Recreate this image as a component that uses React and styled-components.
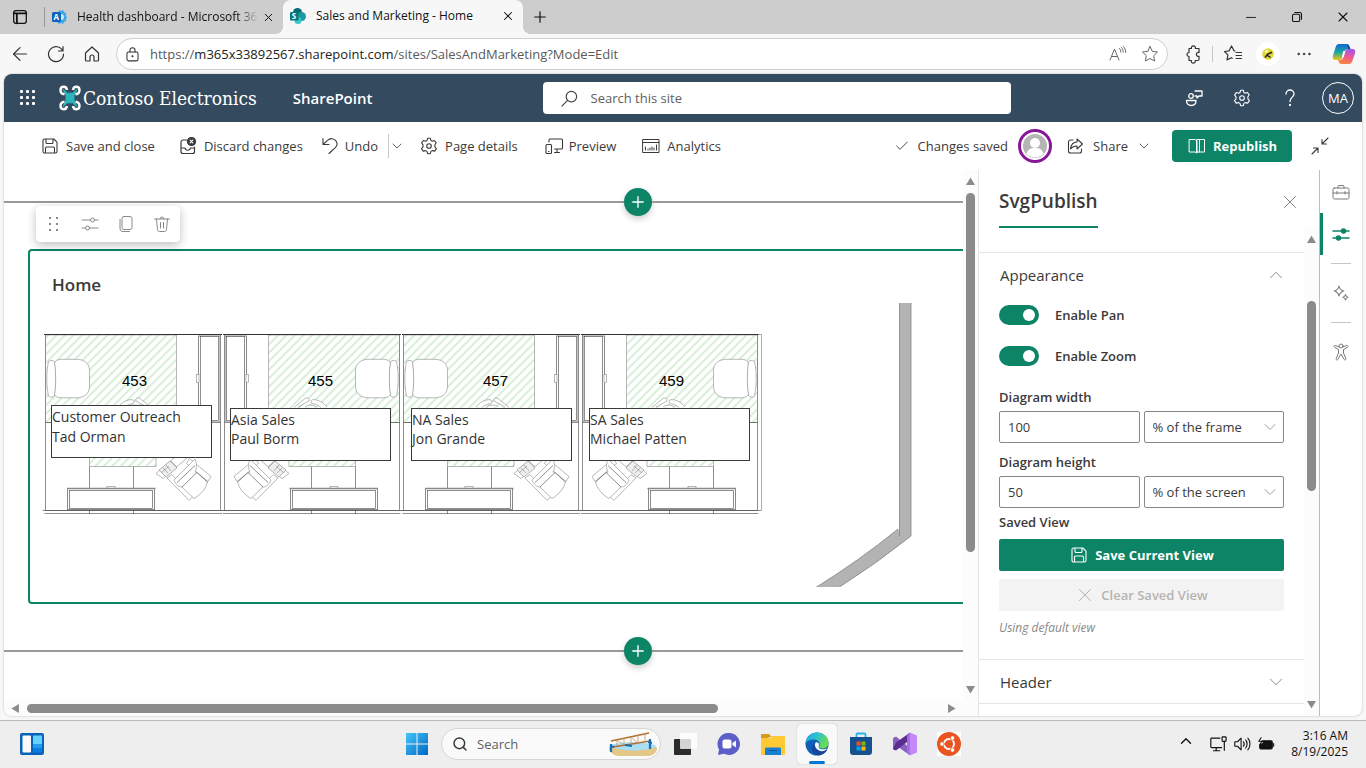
import React from "react";
import styled, { createGlobalStyle, css } from "styled-components";
import { ArrowLeft, Check, ChevronDown, ChevronUp, Plus, Search, X } from "lucide-react";

const green = "#0c8465";
const ink = "#3b3a39";

const GlobalStyle = createGlobalStyle`
  * {
    box-sizing: border-box;
  }
  body {
    margin: 0;
    background: #f7f7f7;
    color: ${ink};
    font-family: "Open Sans", "Noto Sans", sans-serif;
    font-size: 13px;
    line-height: 20px;
  }
  button, input, select {
    font: inherit;
    color: inherit;
  }
  button {
    padding: 0;
    border: 0;
    background: none;
  }
`;

const Screen = styled.div`
  display: flex;
  flex-direction: column;
  height: 100vh;
  overflow: hidden;
`;
const Grow = styled.div`
  flex: 1;
`;
const Svg = styled.svg`
  display: block;
  flex: none;
  fill: none;
  stroke: currentColor;
  stroke-width: ${p => p.$stroke || 1};
  stroke-linecap: round;
  stroke-linejoin: round;
`;

const Icon = ({ size = 20, stroke, children }) => (
  <Svg width={size} height={size} viewBox="0 0 20 20" $stroke={stroke} aria-hidden="true">
    {children}
  </Svg>
);

/* browser tabs */

const TabStrip = styled.div`
  display: flex;
  align-items: center;
  height: 34px;
  background: #cdcdcd;
  color: #111;
  font-size: 12px;
`;
const TabMenu = styled.button`
  display: flex;
  justify-content: center;
  width: 40px;
  margin-right: 4px;
`;
const Tab = styled.div`
  position: relative;
  display: flex;
  align-items: center;
  width: 240px;
  height: 34px;
  padding: 0 8px 2px 7px;
  ${p =>
    p.$active &&
    css`
      background: #f7f7f7;
      border-radius: 8px 8px 0 0;
      &::before,
      &::after {
        content: "";
        position: absolute;
        bottom: 0;
        width: 8px;
        height: 8px;
      }
      &::before {
        right: 100%;
        background: radial-gradient(circle at 0 0, #cdcdcd 8px, #f7f7f7 8px);
      }
      &::after {
        left: 100%;
        background: radial-gradient(circle at 100% 0, #cdcdcd 8px, #f7f7f7 8px);
      }
    `}
  ${p =>
    !p.$active &&
    css`
      width: 239px;
      border-left: 1px solid #9a9a9a;
      height: 20px;
      padding-bottom: 0;
    `}
`;
const TabTitle = styled.span`
  flex: 1;
  margin: 0 4px 0 10px;
  overflow: hidden;
  white-space: nowrap;
  ${p => p.$faded && "mask-image: linear-gradient(to left, transparent, #000 20px);"}
`;
const WindowButton = styled.button`
  display: flex;
  align-items: center;
  justify-content: center;
  width: 46px;
  height: 34px;
`;
const NewTab = styled(WindowButton)`
  width: 34px;
`;

/* address bar */

const AddressBar = styled.div`
  display: flex;
  align-items: center;
  height: 40px;
  padding: 0 3px 0 2px;
  color: #333;
`;
const NavButton = styled.button`
  display: flex;
  align-items: center;
  justify-content: center;
  width: ${p => p.$width || 36}px;
  height: 32px;
`;
const UrlBox = styled.div`
  flex: 1;
  display: flex;
  align-items: center;
  gap: 9px;
  height: 32px;
  margin: 0 6px;
  padding: 0 7px;
  border: 1px solid #cfcfcf;
  border-radius: 16px;
  background: #fff;
`;
const Url = styled.div`
  flex: 1;
  color: #5a5a5a;
  b {
    font-weight: 400;
    color: #222;
  }
`;
const UrlIcons = styled.div`
  display: flex;
  gap: 12px;
  color: #666;
`;
const Separator = styled.div`
  width: 1px;
  height: ${p => p.$height}px;
  background: #c8c8c8;
`;
const Profile = styled.span`
  display: flex;
  align-items: center;
  justify-content: center;
  width: 24px;
  height: 24px;
  border-radius: 50%;
  background: #fff;
`;

/* SharePoint frame */

const Frame = styled.main`
  flex: 1;
  display: flex;
  flex-direction: column;
  min-height: 0;
  margin: 0 4px 4px;
  border-radius: 8px;
  background: #fff;
  box-shadow: 0 0 2px rgba(0, 0, 0, 0.3);
  overflow: hidden;
`;
const SuiteBar = styled.header`
  display: grid;
  grid-template-columns: 23fr 20fr 15fr;
  align-items: center;
  height: 48px;
  flex: none;
  background: #344a5f;
  color: #fff;
`;
const SuiteLeft = styled.div`
  display: flex;
  align-items: center;
`;
const SuiteButton = styled.button`
  display: flex;
  align-items: center;
  justify-content: center;
  width: 48px;
  height: 48px;
`;
const Brand = styled.a`
  display: flex;
  align-items: center;
  gap: 2px;
  margin: 0 36px 0 7px;
  color: #fff;
  text-decoration: none;
  font-family: "DejaVu Serif Condensed", "DejaVu Serif", serif;
  font-size: 19px;
  white-space: nowrap;
`;
const Product = styled.a`
  color: #fff;
  font-size: 15px;
  font-weight: 600;
  text-decoration: none;
`;
const SiteSearch = styled.label`
  display: flex;
  align-items: center;
  gap: 12px;
  height: 32px;
  padding: 0 17px;
  border-radius: 4px;
  background: #fff;
  color: #444;
  input {
    flex: 1;
    border: 0;
    outline: 0;
    padding: 0;
    background: none;
  }
  input::placeholder {
    color: #605e5c;
    opacity: 1;
  }
`;
const SuiteRight = styled.div`
  display: flex;
  justify-content: flex-end;
`;
const Initials = styled.span`
  display: flex;
  align-items: center;
  justify-content: center;
  width: 32px;
  height: 32px;
  border: 1px solid #fff;
  border-radius: 50%;
`;

const CommandBar = styled.div`
  display: flex;
  align-items: center;
  flex: none;
  height: 48px;
  padding: 0 32px 0 36px;
`;
const Command = styled.button`
  display: flex;
  align-items: center;
  gap: ${p => p.$gap || 6}px;
  height: 32px;
  margin-right: ${p => p.$space || 0}px;
  white-space: nowrap;
`;
const Persona = styled.span`
  display: flex;
  align-items: center;
  justify-content: center;
  width: 34px;
  height: 34px;
  margin: 0 13px 0 10px;
  border: 3px solid #881798;
  border-radius: 50%;
`;
const Primary = styled.button`
  display: flex;
  align-items: center;
  justify-content: center;
  gap: 6px;
  height: 32px;
  padding: 0 16px;
  border-radius: 4px;
  background: ${green};
  color: #fff;
  font-weight: 700;
  white-space: nowrap;
  &:disabled {
    background: #f3f3f3;
    color: #b5b3b1;
    font-weight: 600;
  }
`;
const Republish = styled(Primary)`
  width: 120px;
  margin-right: 18px;
`;

const Workspace = styled.div`
  flex: 1;
  display: flex;
  min-height: 0;
`;
const CanvasArea = styled.section`
  flex: 1;
  display: grid;
  grid-template-columns: minmax(0, 1fr) 15px;
  grid-template-rows: minmax(0, 1fr) 15px;
  min-width: 0;
  background: #fcfcfc;
`;
const Canvas = styled.div`
  overflow: hidden;
  background: #fff;
`;
const Page = styled.div`
  position: relative;
  min-width: 1268px;
`;
const Zone = styled.div`
  display: flex;
  align-items: center;
  height: 64px;
  &::before,
  &::after {
    content: "";
    flex: 1;
    height: 2px;
    background: #999;
  }
`;
const AddButton = styled.button`
  display: flex;
  align-items: center;
  justify-content: center;
  width: 28px;
  height: 28px;
  border-radius: 50%;
  background: ${green};
  color: #fff;
  box-shadow: 0 3px 6px rgba(0, 0, 0, 0.2);
`;
const WebPartTools = styled.div`
  position: absolute;
  top: 36px;
  left: 32px;
  display: flex;
  border-radius: 4px;
  background: #fff;
  color: #8a8886;
  box-shadow: 0 3px 10px rgba(0, 0, 0, 0.25);
  button {
    display: flex;
    align-items: center;
    justify-content: center;
    width: 36px;
    height: 36px;
  }
`;
const WebPart = styled.section`
  margin: 15px 24px;
  padding: 16px 0 15px;
  border: 2px solid ${green};
  border-radius: 4px;
  h2 {
    margin: 0 22px;
    font-size: 17px;
    font-weight: 600;
    line-height: 36px;
  }
  svg {
    display: block;
  }
`;

/* scrollbars */

const Track = styled.div`
  display: flex;
  flex-direction: ${p => (p.$horizontal ? "row" : "column")};
  align-items: center;
  gap: 7px;
  padding: ${p => (p.$horizontal ? "0 7px" : "7px 0")};
  background: #fcfcfc;
`;
const Arrow = styled.i`
  flex: none;
  width: 9px;
  height: 9px;
  background: #8b8b8b;
  clip-path: ${p =>
    ({
      up: "polygon(50% 5%, 100% 88%, 0 88%)",
      down: "polygon(0 12%, 100% 12%, 50% 95%)",
      left: "polygon(88% 0, 88% 100%, 5% 50%)",
      right: "polygon(12% 0, 95% 50%, 12% 100%)"
    }[p.$to])};
`;
const Thumb = styled.div`
  flex: ${p => p.$size} 0 0;
  align-self: stretch;
  margin: ${p => (p.$horizontal ? "3px 0" : "0 3px")};
  border-radius: 5px;
  background: #8b8b8b;
`;
const Rest = styled.div`
  flex: ${p => p.$size} 0 0;
`;

const Scrollbar = ({ horizontal, before = 0, thumb, after }) => (
  <Track $horizontal={horizontal}>
    <Arrow $to={horizontal ? "left" : "up"} />
    {before > 0 && <Rest $size={before} />}
    <Thumb $size={thumb} $horizontal={horizontal} />
    <Rest $size={after} />
    <Arrow $to={horizontal ? "right" : "down"} />
  </Track>
);

/* property pane */

const Pane = styled.aside`
  display: grid;
  grid-template-columns: minmax(0, 1fr) 15px;
  grid-template-rows: 58px minmax(0, 1fr);
  width: 341px;
  flex: none;
  border-left: 1px solid #e5e5e5;
`;
const PaneHeader = styled.div`
  grid-column: 1 / -1;
  display: flex;
  justify-content: space-between;
  padding: 0 19px 0 20px;
`;
const PaneTitle = styled.h2`
  margin: 0;
  padding-top: 7px;
  border-bottom: 2px solid ${green};
  font-size: 19px;
  font-weight: 600;
  line-height: 49px;
`;
const CloseButton = styled.button`
  align-self: center;
  margin: 5px 0 0;
  color: #8a8886;
`;
const PaneBody = styled.div`
  padding-top: 24px;
  overflow: hidden;
`;
const GroupHeader = styled.button`
  display: flex;
  align-items: center;
  justify-content: space-between;
  width: 100%;
  height: 44px;
  padding: 0 17px 0 21px;
  border-top: 1px solid #e5e5e5;
  font-size: 15px;
  svg {
    color: #a19f9d;
  }
`;
const GroupBody = styled.div`
  display: flex;
  flex-direction: column;
  padding: 9px 20px 21px;
`;
const PaneDivider = styled.div`
  border-top: 1px solid #e5e5e5;
`;
const Toggle = styled.div`
  display: flex;
  align-items: center;
  gap: 16px;
  height: 20px;
  margin-bottom: 21px;
  font-weight: 600;
  input {
    appearance: none;
    display: flex;
    align-items: center;
    width: 40px;
    height: 20px;
    margin: 0;
    padding: 0 4px;
    border-radius: 10px;
    background: #8a8886;
  }
  input::before {
    content: "";
    width: 12px;
    height: 12px;
    border-radius: 50%;
    background: #fff;
  }
  input:checked {
    justify-content: flex-end;
    background: ${green};
  }
`;
const FieldLabel = styled.label`
  margin-bottom: 4px;
  font-weight: 600;
`;
const FieldRow = styled.div`
  display: grid;
  grid-template-columns: 1fr 1fr;
  gap: 4px;
  margin-bottom: ${p => p.$space}px;
`;
const NumberBox = styled.input`
  width: 100%;
  height: 32px;
  padding: 0 8px;
  border: 1px solid #8a8886;
  border-radius: 2px;
`;
const SelectBox = styled.div`
  display: flex;
  align-items: center;
  position: relative;
  select {
    appearance: none;
    width: 100%;
    height: 32px;
    padding: 0 28px 0 8px;
    border: 1px solid #8a8886;
    border-radius: 2px;
    background: #fff;
  }
  svg {
    position: absolute;
    right: 4px;
    color: #a19f9d;
    pointer-events: none;
  }
`;
const SavedLabel = styled.div`
  margin-bottom: 7px;
  font-weight: 600;
`;
const Hint = styled.em`
  margin-top: 7px;
  color: #8a8886;
  font-size: 12px;
`;
const Stack = styled.div`
  display: grid;
  gap: 8px;
  button {
    border-radius: 2px;
  }
`;
const Rail = styled.nav`
  display: flex;
  flex-direction: column;
  align-items: center;
  width: 43px;
  flex: none;
  padding-top: 1px;
  border-left: 1px solid #bdbdbd;
  hr {
    width: 20px;
    margin: 8px 0;
    border: 0;
    border-top: 1px solid #c8c6c4;
  }
`;
const RailButton = styled.button`
  display: flex;
  align-items: center;
  justify-content: center;
  width: 100%;
  height: 42px;
  color: ${p => (p.$active ? green : "#7a7876")};
  ${p => p.$active && `box-shadow: inset 3px 0 ${green};`}
`;

/* taskbar */

const Taskbar = styled.footer`
  display: grid;
  grid-template-columns: 1fr auto 1fr;
  align-items: center;
  flex: none;
  height: 48px;
  padding-bottom: 2px;
  border-top: 1px solid #bcbcbc;
  background: #eee;
`;
const TaskItems = styled.div`
  display: flex;
  align-items: center;
  gap: 4px;
`;
const TaskButton = styled.button`
  position: relative;
  display: flex;
  align-items: center;
  justify-content: center;
  width: 40px;
  height: 40px;
  border-radius: 4px;
  ${p =>
    p.$active &&
    css`
      background: #f9f9f9;
      box-shadow: 0 0 1px rgba(0, 0, 0, 0.35);
      &::after {
        content: "";
        position: absolute;
        bottom: 0;
        width: 16px;
        height: 3px;
        border-radius: 2px;
        background: #0078d4;
      }
    `}
`;
const WidgetsButton = styled(TaskButton)`
  margin-left: 12px;
`;
const TaskSearch = styled.label`
  display: flex;
  align-items: center;
  gap: 9px;
  width: 220px;
  height: 32px;
  padding: 0 2px 0 10px;
  border: 1px solid #d6d6d6;
  border-radius: 16px;
  background: #fafafa;
  input {
    flex: 1;
    min-width: 0;
    border: 0;
    outline: 0;
    padding: 0;
    background: none;
  }
  input::placeholder {
    color: #606060;
    opacity: 1;
  }
`;
const Tray = styled.div`
  display: flex;
  align-items: center;
  justify-content: flex-end;
  gap: 6px;
  padding-right: 18px;
  color: #111;
`;
const TrayChevron = styled.span`
  margin-right: 8px;
`;
const Clock = styled.div`
  margin-left: 10px;
  font-size: 12px;
  line-height: 16px;
  text-align: right;
`;

/* icons */

const SaveIcon = () => (
  <Icon stroke={1.1}>
    <path d="M3 4.500C3 3.700 3.700 3 4.500 3h9.300L17 6.200v9.300c0 .8-.7 1.500-1.500 1.500h-11C3.700 17 3 16.300 3 15.500zM6 3v3.500c0 .6.4 1 1 1h5c.6 0 1-.4 1-1V3M5.500 17v-5c0-.6.4-1 1-1h7c.6 0 1 .4 1 1v5" />
  </Icon>
);
const GearIcon = ({ size }) => (
  <Icon size={size} stroke={1.1}>
    <circle cx="10" cy="10" r="2.300" />
    <path d="M8.600 2.300h2.800l.5 2.200 1.300.7 2.200-.7 1.800 2.300-1.300 2v2l1.500 1.800-1.700 2.500-2.500-.5-1.300.8-.6 2.300H8.600L8 15.400l-1.300-.8-2.500.5-1.700-2.500L4 10.900v-2l-1.400-2 1.800-2.400 2.300.7L8 4.500z" />
  </Icon>
);
const SlidersIcon = ({ filled }) => (
  <Icon stroke={filled ? 1.5 : 1}>
    <path d={filled ? "M2 7h16M2 14h16" : "M2 6h8.500M14.500 6H18M2 14h3.500M9.500 14H18"} />
    <circle cx="12.500" cy={filled ? 7 : 6} r="2" fill={filled ? "currentColor" : "none"} />
    <circle cx="7.500" cy="14" r="2" fill={filled ? "currentColor" : "none"} />
  </Icon>
);
const StarPath = "M10 2.500l2.300 4.800 5.200.7-3.800 3.700.9 5.300-4.600-2.500L5.400 17l.9-5.300L2.500 8l5.200-.7z";

const DroneLogo = () => (
  <svg width="22" height="26" viewBox="0 0 22 26" fill="none">
    <path d="M4 4.500l4.500 3.700h5L18 4.500l-3 6v5l3 6-4.500-3.700h-5L4 21.500l3-6v-5z" fill="#2bb5bd" stroke="#2bb5bd" />
    <g stroke="#fff" strokeWidth="2.400">
      <path d="M5.500 9.300C3 9 1.500 7.500 1.500 5.200c0-4.500 6-4.500 6.500-.2" />
      <path d="M16.500 9.300c2.500-.3 4-1.800 4-4.100 0-4.500-6-4.500-6.500-.2" />
      <path d="M5.500 16.700C3 17 1.500 18.500 1.500 20.800c0 4.500 6 4.500 6.500.2" />
      <path d="M16.500 16.700c2.500.3 4 1.800 4 4.100 0 4.500-6 4.500-6.500.2" />
    </g>
  </svg>
);

const HealthIcon = () => (
  <svg width="15" height="16" viewBox="0 0 15 16">
    <path d="M7 1l2 1 2-1 1 2 2 1v3l1 1-1 2v2l-2 1-1 2-2-1-2 1-2-2z" fill="#3aa8ea" />
    <circle cx="9" cy="8" r="3" fill="#c5ecff" />
    <rect x="0" y="3" width="9" height="10" rx="1.500" fill="#0f62c0" />
    <text x="1.500" y="11" fontSize="8" fontWeight="700" fontFamily="Open Sans" fill="#fff">A</text>
  </svg>
);
const SharePointIcon = () => (
  <svg width="16" height="16" viewBox="0 0 16 16">
    <circle cx="7.500" cy="4.500" r="4.500" fill="#036c70" />
    <circle cx="11.500" cy="8.500" r="4.500" fill="#1a9ba1" />
    <circle cx="8" cy="12.500" r="3.500" fill="#37c6d0" />
    <rect x="0" y="4" width="8.500" height="8.500" rx="1" fill="#03787c" />
    <text x="1.700" y="11" fontSize="8" fontWeight="700" fontFamily="Open Sans" fill="#fff">S</text>
  </svg>
);
const CopilotIcon = () => (
  <svg width="24" height="22" viewBox="0 0 24 22">
    <defs>
      <linearGradient id="cpA" x1="0" y1="0" x2="0" y2="1">
        <stop offset="0" stopColor="#1467d8" />
        <stop offset="0.500" stopColor="#17a6a0" />
        <stop offset="1" stopColor="#f2c518" />
      </linearGradient>
      <linearGradient id="cpB" x1="0.500" y1="0" x2="0.300" y2="1">
        <stop offset="0" stopColor="#a356ea" />
        <stop offset="0.500" stopColor="#ef5a90" />
        <stop offset="1" stopColor="#f98a3c" />
      </linearGradient>
    </defs>
    <path d="M7 1h8c1.800 0 2.300 1.500 2.800 3l.7 2h-3c-1.500 0-2.500 1-3 2.500L10.800 14c-.6 1.900-1.500 3-3.500 3H3.500C1 17 .3 14.800 1 12.500l2.500-8C4.200 2.200 5 1 7 1z" fill="url(#cpA)" />
    <path d="M17 21H9.500c-2 0-2.600-1.500-3-3l-.3-1h2c1.900 0 2.600-1.200 3.200-3l1.700-5.500C13.700 6.700 14.600 6 16 6h4.500c2.500 0 3.200 2 2.500 4.500l-2.500 7c-.8 2.300-1.500 3.500-3.500 3.500z" fill="url(#cpB)" />
    <path d="M11.300 8h2.200l-2 6.500H9.800z" fill="#fff" />
    <path d="M14.500 1.500c2.300 0 2.700 2.500 4 4.500h-3c1-1.500.5-3-1-4.500z" fill="#1a3fb0" />
  </svg>
);

/* floor plan */

const thin = { stroke: "#888", strokeWidth: 0.6, fill: "#fff" };

const Cubicle = ({ hatch }) => (
  <g {...thin}>
    <rect x="45.500" y="334.500" width="175" height="176" stroke="#444" />
    <path d="M45.500 335H176.500V422.500H156V466.500H89.500V422.500H45.500z" fill={`url(#${hatch})`} />
    <path d="M45.500 422.500H220.500M42.500 510.500H224M44.500 513.500H222M89.500 466.500V488M133.500 466.500V488M89.500 510V514M133.500 510V514" stroke="#444" />
    <path d="M44 334.500H222" stroke="#333" strokeWidth="1" />
    {/* wardrobe */}
    <rect x="198.500" y="336" width="21.500" height="86" strokeWidth="1" />
    <rect x="200.500" y="336.500" width="18" height="84" stroke="#444" />
    <rect x="196.500" y="374.500" width="2.500" height="8" />
    {/* guest chair */}
    <path d="M54.500 364c0-3 3-4.500 7-4.700h15c8 0 13 4.500 13 11v16c0 7-5 11.500-13 11.500h-15c-4-.2-7-1.500-7-4.500 1.300-10 1.300-20 0-29.300z" />
    <path d="M48.500 361.500c2-1.500 5.500-1.500 6 .5 1.600 11 1.600 23 0 33-.5 2.500-4 2.800-6 1-2.300-11-2.300-24 0-34.500z" />
    {/* desk chair behind the label */}
    <path d="M118 407c4-5 9-7.500 14-7.300 3 .2 2 3.500 0 4-4 .8-6 2-8 4M147 407l-11-6c-1-3 2-3.500 4-2.500l11 9M129 407c2-2.500 9-2.500 11 0" />
    {/* laptop shelf */}
    <path d="M156 473.500l28-24 6 6-27 23z" />
    <path d="M159 470l11-9 7 7-11 9zM163 468l5 5M166 465l5 6M171 461l6 6M161 473l8-7" fill="#eee" />
    {/* drafting chair */}
    <path d="M167 478l22 22.300 4-3.700-21-22z" />
    <path d="M189.500 458.500l21.500 18-3 5-21.500-18z" />
    <path d="M174 480l21-21c2 5 2 9 0 13l12 10c0 6-8 14-13 16.500L182 487c-3 0-6-2-8-7z" />
    <path d="M177 482.500l18-17M182 487l15-14.500 11 10" stroke="#444" />
    {/* low cabinet */}
    <rect x="67.500" y="488.500" width="87" height="21" strokeWidth="1" />
    <rect x="69.500" y="490.500" width="83" height="18" stroke="#444" />
    <rect x="107" y="486.500" width="8" height="2" />
    <path d="M67 488.500H155.500" strokeWidth="1.500" />
  </g>
);

const cubicles = [
  { place: "translate(0 0)", room: "453", numX: 122, x: 51.5, y: 405.5, base: 422, line: 20, name: "Customer Outreach", who: "Tad Orman" },
  { place: "translate(445 0) scale(-1 1)", flip: true, room: "455", numX: 308, x: 230.5, y: 408.5, base: 425, line: 19, name: "Asia Sales", who: "Paul Borm" },
  { place: "translate(358 0)", room: "457", numX: 483, x: 411.5, y: 408.5, base: 425, line: 19, name: "NA Sales", who: "Jon Grande" },
  { place: "translate(803 0) scale(-1 1)", flip: true, room: "459", numX: 659, x: 589.5, y: 408.5, base: 425, line: 19, name: "SA Sales", who: "Michael Patten" }
];

const RoomNumber = styled.text`
  font: 15px "Liberation Sans", Arial, sans-serif;
  fill: #000;
`;
const RoomLabel = styled.text`
  font-size: 14px;
  fill: #333;
`;

const FloorPlan = () => (
  <svg width="1212" height="284" viewBox="30 303 1212 284" role="img" aria-label="Floor plan">
    <defs>
      <pattern id="hatch" width="6" height="6" patternUnits="userSpaceOnUse" patternTransform="rotate(45)">
        <path d="M1 0V6" stroke="#a9dba9" strokeWidth="0.900" />
      </pattern>
      <pattern id="hatchFlip" width="6" height="6" patternUnits="userSpaceOnUse" patternTransform="rotate(-45)">
        <path d="M1 0V6" stroke="#a9dba9" strokeWidth="0.900" />
      </pattern>
    </defs>
    {cubicles.map(c => (
      <g key={c.room} transform={c.place}>
        <Cubicle hatch={c.flip ? "hatchFlip" : "hatch"} />
      </g>
    ))}
    <path d="M758 334.500H761.500V510.500H758" fill="none" stroke="#888" strokeWidth="0.700" />
    {cubicles.map(c => (
      <g key={c.room}>
        <RoomNumber x={c.numX} y="386">{c.room}</RoomNumber>
        <rect x={c.x} y={c.y} width="160" height="52" fill="#fff" stroke="#3a3a3a" />
        <RoomLabel x={c.x + 0.5} y={c.base}>{c.name}</RoomLabel>
        <RoomLabel x={c.x + 0.5} y={c.base + c.line}>{c.who}</RoomLabel>
      </g>
    ))}
    <path d="M898 529Q860 560 815 588H838Q876 564 911 536V302H899.500V531z" fill="#b3b3b3" />
    <path d="M899.500 302V536M911 302V536Q876 564 838 588M898 529Q860 560 815 588" fill="none" stroke="#858585" strokeWidth="0.800" />
  </svg>
);

const TaskIcon = ({ children }) => (
  <svg width="24" height="24" viewBox="0 0 24 24">
    {children}
  </svg>
);

export default function App() {
  return (
    <Screen>
      <GlobalStyle />
      <TabStrip>
        <TabMenu aria-label="Tab actions">
          <Icon size={18} stroke={1.4}>
            <rect x="3" y="3" width="14" height="14" rx="2.500" />
            <path d="M3 6h14M6.500 6v11" strokeWidth="2" />
          </Icon>
        </TabMenu>
        <Tab>
          <HealthIcon />
          <TabTitle $faded>Health dashboard - Microsoft 365</TabTitle>
          <X size={13} strokeWidth={1.8} />
        </Tab>
        <Tab $active>
          <SharePointIcon />
          <TabTitle>Sales and Marketing - Home</TabTitle>
          <X size={14} strokeWidth={1.8} />
        </Tab>
        <NewTab aria-label="New tab">
          <Plus size={18} strokeWidth={1.6} />
        </NewTab>
        <Grow />
        <WindowButton aria-label="Minimize">
          <Icon size={18}><path d="M5 10.500h10" /></Icon>
        </WindowButton>
        <WindowButton aria-label="Restore">
          <Icon size={18} stroke={1.2}>
            <rect x="5" y="7" width="8" height="8" rx="1.500" />
            <path d="M7.500 5h5.500a2 2 0 0 1 2 2v5.500" />
          </Icon>
        </WindowButton>
        <WindowButton aria-label="Close window">
          <X size={16} strokeWidth={1.6} />
        </WindowButton>
      </TabStrip>

      <AddressBar>
        <NavButton aria-label="Back"><ArrowLeft size={22} strokeWidth={1.3} /></NavButton>
        <NavButton aria-label="Refresh">
          <Icon stroke={1.2}>
            <path d="M16.800 7A7.500 7.500 0 1 0 17.500 10M17 2.500V7h-4.500" />
          </Icon>
        </NavButton>
        <NavButton aria-label="Home">
          <Icon stroke={1.2}>
            <path d="M3.500 9L10 3l6.500 6v7c0 .6-.4 1-1 1H12v-4c0-1-.8-2-2-2s-2 1-2 2v4H4.500c-.6 0-1-.4-1-1z" />
          </Icon>
        </NavButton>
        <UrlBox>
          <Icon size={17} stroke={1.2}>
            <rect x="3.500" y="7" width="13" height="10.500" rx="2" />
            <path d="M7 7V5a3 3 0 0 1 6 0v2" />
            <circle cx="10" cy="12" r="0.600" fill="currentColor" />
          </Icon>
          <Url>https://<b>m365x33892567.sharepoint.com</b>/sites/SalesAndMarketing?Mode=Edit</Url>
          <UrlIcons>
            <Icon>
              <path d="M2 16L6.500 5 11 16M3.500 12.500h6M11.500 4.500c1 1 1.300 2 1.300 3.500M13.500 3.500c1.200 1.200 1.700 2.800 1.700 4.500M15.500 2.500c1.500 1.600 2.200 3.400 2.200 6" />
            </Icon>
            <Icon><path d={StarPath} /></Icon>
          </UrlIcons>
        </UrlBox>
        <NavButton $width={38} aria-label="Extensions">
          <Icon stroke={1.2}>
            <path d="M6 4.500h2.500a2 2 0 1 1 3.800 0H16v4a2 2 0 1 0 0 3.800v3c0 .7-.5 1.200-1.200 1.200h-2.600a2 2 0 1 1-3.800 0H6v-4a2 2 0 1 1 0-4z" />
          </Icon>
        </NavButton>
        <Separator $height={16} />
        <NavButton $width={40} aria-label="Favorites">
          <Icon stroke={1.2}>
            <path d="M12 7l-1-.2L8.500 2 6.200 6.800 1.500 7.500l3.400 3.400-.9 5 4.300-2.200 1 .5M13 8.500h5.500M13 11.500h5.500M13 14.500h5.500" />
          </Icon>
        </NavButton>
        <NavButton $width={30} aria-label="Profile">
          <Profile>
            <svg width="12" height="12" viewBox="0 0 12 12">
              <circle cx="6" cy="6" r="5.800" fill="#e0d53a" />
              <path d="M3 9.500l3-3.800M5 6.500l5-2.300M5.500 7.500l3 2" stroke="#222" strokeWidth="1.500" />
              <circle cx="4.500" cy="3.500" r="1.800" fill="#f5f2a0" />
            </svg>
          </Profile>
        </NavButton>
        <NavButton $width={42} aria-label="More">
          <Icon size={18}>
            <g fill="currentColor">
              <circle cx="4" cy="10" r="0.900" />
              <circle cx="10" cy="10" r="0.900" />
              <circle cx="16" cy="10" r="0.900" />
            </g>
          </Icon>
        </NavButton>
        <NavButton $width={38} aria-label="Copilot"><CopilotIcon /></NavButton>
      </AddressBar>

      <Frame>
        <SuiteBar>
          <SuiteLeft>
            <SuiteButton aria-label="App launcher">
              <svg width="16" height="16" fill="#fff">
                {[0, 6, 12].map(y => [0, 6, 12].map(x => <rect key={`${x}-${y}`} x={x} y={y} width="3" height="3" rx="1" />))}
              </svg>
            </SuiteButton>
            <Brand href="#">
              <DroneLogo />
              Contoso Electronics
            </Brand>
            <Product href="#">SharePoint</Product>
          </SuiteLeft>
          <SiteSearch>
            <Icon size={19} stroke={1.2}>
              <circle cx="12" cy="8" r="5.500" />
              <path d="M8 12l-6 6" />
            </Icon>
            <input aria-label="Search this site" placeholder="Search this site" />
          </SiteSearch>
          <SuiteRight>
            <SuiteButton aria-label="Feedback">
              <Icon stroke={1.3}>
                <circle cx="7" cy="8" r="2.300" />
                <path d="M2.500 12.500h9.500c0 3-1.500 5-4.700 5s-4.800-2-4.800-5zM11 3h7v5h-3l-2 2V8h-2" />
              </Icon>
            </SuiteButton>
            <SuiteButton aria-label="Settings"><GearIcon /></SuiteButton>
            <SuiteButton aria-label="Help">
              <Icon stroke={1.3}>
                <path d="M6 6a4 4 0 0 1 8 0c0 3-4 3.500-4 7.500" />
                <circle cx="10" cy="17" r="0.500" fill="currentColor" />
              </Icon>
            </SuiteButton>
            <SuiteButton aria-label="Account"><Initials>MA</Initials></SuiteButton>
          </SuiteRight>
        </SuiteBar>

        <CommandBar>
          <Command $space={23}><SaveIcon />Save and close</Command>
          <Command $space={17}>
            <Icon stroke={1.2}>
              <path d="M9 4H5a2 2 0 0 0-2 2v9.500a2 2 0 0 0 2 2h9.500a2 2 0 0 0 2-2V11M3 12h4c.5 3 5 3 5.500 0h4" />
              <circle cx="13.500" cy="5.500" r="4" fill="currentColor" />
              <path d="M12.200 4.200l2.600 2.600M14.800 4.200l-2.600 2.600" stroke="#fff" />
            </Icon>
            Discard changes
          </Command>
          <Command $gap={5} $space={10}>
            <Icon stroke={1.1}>
              <path d="M3 2.500v6h6M3.500 8l4-3.700c3-2.600 6.500-1.800 8.200.3 1.800 2.200 1.600 5-.4 7L9 17.500" />
            </Icon>
            Undo
          </Command>
          <Separator $height={24} />
          <Command $space={14} aria-label="Undo options"><ChevronDown size={16} strokeWidth={1.2} /></Command>
          <Command $space={26}><GearIcon />Page details</Command>
          <Command $gap={5} $space={25}>
            <Icon stroke={1.1}>
              <path d="M5 6V4c0-.6.400-1 1-1h11.500c.6 0 1 .4 1 1v8c0 .6-.4 1-1 1H10.500M13 13v3.500M10.500 16.500h5" />
              <rect x="2" y="8.500" width="5.500" height="9" rx="1" />
              <path d="M4.500 15.500h.5" />
            </Icon>
            Preview
          </Command>
          <Command>
            <Icon>
              <path d="M2 3.500h16v13H2zM2 6.500h16M4.500 14v-3M7 14v-1M9 14v-2M11 14v-3M13 14v-2M15.500 14V9" />
            </Icon>
            Analytics
          </Command>
          <Grow />
          <Command as="span" $gap={8}><Check size={16} strokeWidth={1.4} />Changes saved</Command>
          <Persona>
            <svg width="24" height="24" viewBox="0 0 24 24">
              <circle cx="12" cy="12" r="12" fill="#b5b5b5" />
              <circle cx="12" cy="9" r="5" fill="#fff" />
              <path d="M3.500 20c1-5 4.500-6 8.500-6s7.500 1 8.500 6C16 24.500 8 24.500 3.500 20z" fill="#fff" />
            </svg>
          </Persona>
          <Command $gap={8} $space={20}>
            <Icon stroke={1.1}>
              <path d="M8 4H5.500a2 2 0 0 0-2 2v9a2 2 0 0 0 2 2h9a2 2 0 0 0 2-2v-2M12 3l5.500 5-5.500 5v-3c-3 0-5 1-6.500 3 .5-4 2.500-7 6.500-7z" />
            </Icon>
            <span>Share</span>
            <ChevronDown size={16} strokeWidth={1.2} />
          </Command>
          <Republish>
            <Icon>
              <path d="M2.500 3.500H8L10 5v12l-2-1H2.500zM10 3.500h7.500v12.500H10zM12.500 3.500v12.500" />
            </Icon>
            Republish
          </Republish>
          <Command aria-label="Collapse">
            <Icon stroke={1.1}>
              <path d="M18 2l-6 6M12 3.500V8h4.500M2 18l6-6M3.500 12H8v4.500" />
            </Icon>
          </Command>
        </CommandBar>

        <Workspace>
          <CanvasArea>
            <Canvas>
              <Page>
                <Zone>
                  <AddButton aria-label="Add section above"><Plus size={18} strokeWidth={1.8} /></AddButton>
                </Zone>
                <WebPartTools>
                  <button aria-label="Move">
                    <svg width="10" height="16" fill="currentColor">
                      {[1, 7, 13].map(y => [0, 7].map(x => <rect key={`${x}-${y}`} x={x} y={y} width="2" height="2" />))}
                    </svg>
                  </button>
                  <button aria-label="Edit properties"><SlidersIcon /></button>
                  <button aria-label="Duplicate">
                    <Icon>
                      <rect x="6" y="2.500" width="10" height="13" rx="2" />
                      <path d="M4 5.500v9.500a3 3 0 0 0 3 2.500h6.500" />
                    </Icon>
                  </button>
                  <button aria-label="Delete">
                    <Icon>
                      <path d="M2.500 5h15M8 5a2 2 0 0 1 4 0M4.500 5l1 10.500c.1 1.200.9 2 2 2h5c1.100 0 1.900-.8 2-2L15.500 5M8.500 8.500v5.500M11.500 8.500v5.500" />
                    </Icon>
                  </button>
                </WebPartTools>
                <WebPart>
                  <h2>Home</h2>
                  <FloorPlan />
                </WebPart>
                <Zone>
                  <AddButton aria-label="Add section below"><Plus size={18} strokeWidth={1.8} /></AddButton>
                </Zone>
              </Page>
            </Canvas>
            <Scrollbar thumb={360} after={119} />
            <Scrollbar horizontal thumb={691} after={215} />
          </CanvasArea>

          <Pane>
            <PaneHeader>
              <PaneTitle>SvgPublish</PaneTitle>
              <CloseButton aria-label="Close pane"><Icon><path d="M4.500 4.500l11 11M15.500 4.500l-11 11" /></Icon></CloseButton>
            </PaneHeader>
            <PaneBody>
              <GroupHeader>Appearance<ChevronUp size={22} strokeWidth={1.1} /></GroupHeader>
              <GroupBody>
                <Toggle>
                  <input type="checkbox" role="switch" id="pan" defaultChecked />
                  <label htmlFor="pan">Enable Pan</label>
                </Toggle>
                <Toggle>
                  <input type="checkbox" role="switch" id="zoom" defaultChecked />
                  <label htmlFor="zoom">Enable Zoom</label>
                </Toggle>
                <FieldLabel htmlFor="width">Diagram width</FieldLabel>
                <FieldRow $space={9}>
                  <NumberBox id="width" defaultValue="100" />
                  <SelectBox>
                    <select aria-label="Diagram width unit"><option>% of the frame</option></select>
                    <ChevronDown size={20} strokeWidth={1.2} />
                  </SelectBox>
                </FieldRow>
                <FieldLabel htmlFor="height">Diagram height</FieldLabel>
                <FieldRow $space={4}>
                  <NumberBox id="height" defaultValue="50" />
                  <SelectBox>
                    <select aria-label="Diagram height unit"><option>% of the screen</option></select>
                    <ChevronDown size={20} strokeWidth={1.2} />
                  </SelectBox>
                </FieldRow>
                <SavedLabel>Saved View</SavedLabel>
                <Stack>
                  <Primary><SaveIcon />Save Current View</Primary>
                  <Primary disabled>
                    <Icon><path d="M4.500 4.500l11 11M15.500 4.500l-11 11" /></Icon>
                    Clear Saved View
                  </Primary>
                </Stack>
                <Hint>Using default view</Hint>
              </GroupBody>
              <GroupHeader>Header<ChevronDown size={22} strokeWidth={1.1} /></GroupHeader>
              <PaneDivider />
            </PaneBody>
            <Scrollbar before={43} thumb={190} after={195} />
          </Pane>

          <Rail>
            <RailButton aria-label="Toolbox">
              <Icon>
                <rect x="2" y="6" width="16" height="11" rx="1.500" />
                <path d="M7 6V4.500c0-.6.4-1 1-1h4c.6 0 1 .4 1 1V6M2 11h16M6 9.500V12M14 9.500V12" />
              </Icon>
            </RailButton>
            <RailButton $active aria-label="Properties"><SlidersIcon filled /></RailButton>
            <hr />
            <RailButton aria-label="Design ideas">
              <Icon stroke={1.1}>
                <path d="M8 3c.6 3 1.800 4.200 4.700 5C9.800 8.800 8.600 10 8 13c-.6-3-1.800-4.200-4.700-5C6.200 7.200 7.400 6 8 3zM14.500 11.500c.3 1.500 1 2.200 2.500 2.700-1.500.5-2.200 1.200-2.500 2.700-.3-1.500-1-2.200-2.500-2.700 1.500-.5 2.200-1.200 2.500-2.700z" />
              </Icon>
            </RailButton>
            <hr />
            <RailButton aria-label="Accessibility">
              <Icon>
                <circle cx="10" cy="4" r="2" />
                <path d="M8 5L4.500 3.500c-1.400-.5-2 1.300-.8 1.900L7.500 7.500V11L5.200 16.500c-.5 1.400 1.200 2 1.800.8L10 12l3 5.300c.6 1.200 2.300.6 1.800-.8L12.500 11V7.500l3.800-2.100c1.200-.6.600-2.400-.8-1.900L12 5" />
              </Icon>
            </RailButton>
          </Rail>
        </Workspace>
      </Frame>

      <Taskbar>
        <WidgetsButton aria-label="Widgets">
          <TaskIcon>
            <rect x="0" y="1" width="24" height="22" rx="2" fill="#0a63b8" />
            <rect x="2.500" y="3.500" width="8.500" height="17" rx="1" fill="#fafafa" />
            <rect x="13" y="3.500" width="9" height="9" fill="#62d3fb" />
            <rect x="13" y="12.500" width="9" height="4" fill="#1f9df0" />
            <rect x="13" y="16.500" width="9" height="4" fill="#0a7be0" />
          </TaskIcon>
        </WidgetsButton>
        <TaskItems>
          <TaskButton aria-label="Start">
            <TaskIcon>
              <defs>
                <linearGradient id="win" x1="0" y1="0" x2="1" y2="1">
                  <stop offset="0" stopColor="#45c6f7" />
                  <stop offset="1" stopColor="#0067c5" />
                </linearGradient>
              </defs>
              <path d="M1 1h10.500v10.500H1zM12.500 1H23v10.500H12.500zM1 12.500h10.500V23H1zM12.500 12.500H23V23H12.500z" fill="url(#win)" />
            </TaskIcon>
          </TaskButton>
          <TaskSearch>
            <Search size={16} strokeWidth={2.2} />
            <input aria-label="Search" placeholder="Search" />
            <svg width="50" height="26" viewBox="0 0 50 26">
              <path d="M1 17c3-5 12-4 20-4s22-2 28 4c0 4-3 7-8 8H10c-5-1-9-4-9-8z" fill="#e3c787" />
              <path d="M1 15c8-5 38-5 48 0-10 6-36 6-48 0z" fill="#a9def5" />
              <path d="M3 10l38-8M5 16l37-6" stroke="#b0702f" strokeWidth="1.500" fill="none" />
              <path d="M9 9v6M16 7v7M23 6v7M30 4v8M37 3v8M9 9l7 5M23 6l7 6" stroke="#c79565" strokeWidth="0.800" fill="none" />
              <path d="M3 13v8M2 15l4 1M42 8v10M40 11l4 1M17 14l7 1" stroke="#1670b8" strokeWidth="2.200" fill="none" />
            </svg>
          </TaskSearch>
          <TaskButton aria-label="Task view">
            <TaskIcon>
              <rect x="1" y="7" width="17" height="16" rx="1" fill="#2b2b2b" />
              <rect x="7" y="1" width="17" height="16" rx="1" fill="#fff" opacity="0.800" />
            </TaskIcon>
          </TaskButton>
          <TaskButton aria-label="Chat">
            <TaskIcon>
              <path d="M12 1a11 11 0 1 1-5 20.800L1 23l1-5.500A11 11 0 0 1 12 1z" fill="#5b5fc7" />
              <rect x="5.500" y="7.500" width="9" height="9" rx="2" fill="#fff" />
              <path d="M15.500 11l3.500-2.500v7L15.500 13z" fill="#fff" />
            </TaskIcon>
          </TaskButton>
          <TaskButton aria-label="File Explorer">
            <TaskIcon>
              <path d="M0 3c0-.6.400-1 1-1h7l3 3h-2l-9 4z" fill="#d99a1a" />
              <path d="M0 6h10l1.500-2H23c.6 0 1 .4 1 1v17c0 .6-.4 1-1 1H0z" fill="#fdc935" />
              <path d="M4 23v-6c0-1 .6-1.500 1.500-1.500h13c.9 0 1.500.5 1.500 1.500v6z" fill="#1a7fd0" />
              <path d="M8 18.500h8" stroke="#0c55a0" />
            </TaskIcon>
          </TaskButton>
          <TaskButton $active aria-label="Edge">
            <TaskIcon>
              <defs>
                <linearGradient id="edgeTop" x1="0" y1="0" x2="1" y2="0.400">
                  <stop offset="0" stopColor="#1ea2e8" />
                  <stop offset="0.500" stopColor="#2bc3d0" />
                  <stop offset="1" stopColor="#6bdc4f" />
                </linearGradient>
              </defs>
              <circle cx="12" cy="12" r="11.500" fill="#0f5fb5" />
              <path d="M.6 11C1.500 4.500 6.300.5 12 .5c6.500 0 11.500 4.500 11.500 10 0 4-2.700 6-5.800 6-2.700 0-4.200-1-3.700-1.900 1.500-2 .6-6.100-3-6.900C7 6.800 2.500 8 .6 11z" fill="url(#edgeTop)" />
              <path d="M10 11.500c-1.500 5 3 9.500 12.300 6C19 23.500 13 24 10.500 22.500 5.500 19.500 6 13 10 11.500z" fill="#17459a" />
              <path d="M11 10.300c2.500-.8 3.500 2 2.800 3.700-.8 1.700 1 3.200 4.500 3.200 1.500 0 3-.4 3.900-1-1.200 2-3.700 3.200-6 3-4-.3-8.500-6-5.200-8.900z" fill="#f4fbff" />
            </TaskIcon>
          </TaskButton>
          <TaskButton aria-label="Store">
            <TaskIcon>
              <path d="M7.500 6V2.500c0-.6.400-1 1-1h7c.6 0 1 .4 1 1V6" fill="none" stroke="#25b4ee" strokeWidth="1.800" />
              <path d="M1 5h22v15c0 2-1.200 3-3 3H4c-1.800 0-3-1-3-3z" fill="#16508f" />
              <path d="M7.500 9.500h4v4h-4z" fill="#f25022" />
              <path d="M12.500 9.500h4v4h-4z" fill="#7fba00" />
              <path d="M7.500 14.500h4v4h-4z" fill="#00a4ef" />
              <path d="M12.500 14.500h4v4h-4z" fill="#ffb900" />
            </TaskIcon>
          </TaskButton>
          <TaskButton aria-label="Visual Studio">
            <TaskIcon>
              <path d="M0 6l3-1.500L18 17v6L16.500 23 3 13.500 2 18.500 0 17z" fill="#8661c5" />
              <path d="M0 17l3 1.500L18 7V1h-1.500L3 10.500z" fill="#5c2d91" />
              <path d="M17 0.500l7 3v17l-7 3z" fill="#c58af9" />
              <path d="M17 .5v23l-3-3V4z" fill="#a36fe0" />
            </TaskIcon>
          </TaskButton>
          <TaskButton aria-label="Ubuntu">
            <TaskIcon>
              <rect width="24" height="24" fill="#fff" />
              <circle cx="12" cy="12" r="12" fill="#e95420" />
              <circle cx="12" cy="12" r="5" fill="none" stroke="#fff" strokeWidth="2" />
              <path d="M12 12H5M12 12l3.500-6M12 12l3.500 6" stroke="#e95420" strokeWidth="1" />
              <g fill="#fff" stroke="#e95420" strokeWidth="0.800">
                <circle cx="5" cy="12" r="2.200" />
                <circle cx="15.500" cy="6" r="2.200" />
                <circle cx="15.500" cy="18" r="2.200" />
              </g>
            </TaskIcon>
          </TaskButton>
        </TaskItems>
        <Tray>
          <TrayChevron><ChevronUp size={18} strokeWidth={1.8} /></TrayChevron>
          <Icon size={18} stroke={1.3}>
            <path d="M12 3.500H3c-.6 0-1 .4-1 1v8.500c0 .6.400 1 1 1h11M8 14v3M5 17.500h7M17 7v10" />
            <rect x="14.500" y="2" width="4.500" height="5" rx="1" />
          </Icon>
          <Icon size={18} stroke={1.2}>
            <path d="M2 7.500v5h3l4 4V3.500l-4 4zM11.500 7.500c1.200 1.500 1.200 3.500 0 5M14 5.500c2.200 2.500 2.200 6.500 0 9M16.500 3.500c3.200 3.700 3.200 9.300 0 13" />
          </Icon>
          <Icon size={18} stroke={1.2}>
            <path d="M6 6.500h9.500c.8 0 1.500.7 1.500 1.500v6c0 .8-.7 1.500-1.500 1.500h-11c-.8 0-1.500-.7-1.500-1.500v-3L7.500 9z" fill="currentColor" />
            <path d="M18.500 9.500v3M4.500 3L2 7h3.500L3 11" />
          </Icon>
          <Clock>
            <div>3:16 AM</div>
            <div>8/19/2025</div>
          </Clock>
        </Tray>
      </Taskbar>
    </Screen>
  );
}
